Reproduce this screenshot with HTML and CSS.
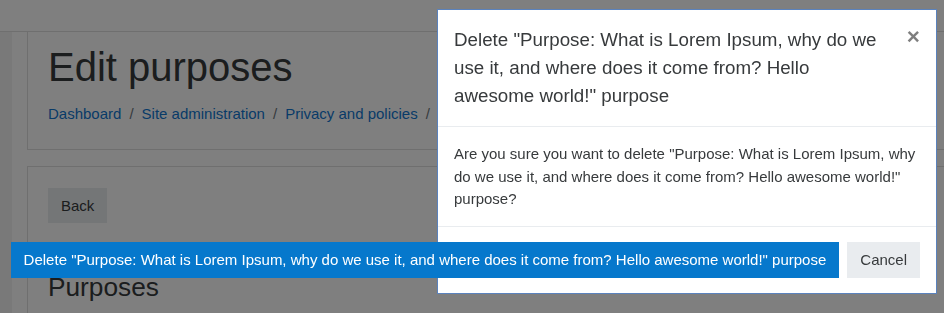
FILE: index.html
```html
<!DOCTYPE html>
<html lang="en">
<head>
    <meta charset="UTF-8">
    <meta name="viewport" content="width=device-width, initial-scale=1.0">
    <title>Edit purposes</title>
    <link rel="stylesheet" href="styles.css">
</head>
<body>
    <nav class="navbar"></nav>

    <div class="page">
        <div class="drawer-strip"></div>

        <div class="main">
            <!-- Page header -->
            <div class="card header-card">
                <h1>Edit purposes</h1>
                <ol class="breadcrumb">
                    <li><a href="#">Dashboard</a></li>
                    <li><a href="#">Site administration</a></li>
                    <li><a href="#">Privacy and policies</a></li>
                    <li class="crumb-hidden"></li>
                </ol>
            </div>

            <!-- Content -->
            <div class="card content-card">
                <button class="btn btn-secondary">Back</button>
                <h3>Purposes</h3>
            </div>
        </div>
    </div>

    <div class="backdrop"></div>

    <!-- Modal -->
    <div class="modal" role="dialog">
        <div class="modal-header">
            <h5 class="modal-title">Delete "Purpose: What is Lorem Ipsum, why do we use it, and where does it come from? Hello awesome world!" purpose</h5>
            <button class="close" aria-label="Close">&times;</button>
        </div>
        <div class="modal-body">
            Are you sure you want to delete "Purpose: What is Lorem Ipsum, why do we use it, and where does it come from? Hello awesome world!" purpose?
        </div>
        <div class="modal-footer">
            <button class="btn btn-primary">Delete "Purpose: What is Lorem Ipsum, why do we use it, and where does it come from? Hello awesome world!" purpose</button>
            <button class="btn btn-secondary">Cancel</button>
        </div>
    </div>
</body>
</html>
```

FILE: styles.css
```css
/* Global */
* {
    box-sizing: border-box;
    margin: 0;
    padding: 0;
}

body {
    font-family: "Liberation Sans", Arial, sans-serif;
    font-size: 15px;
    line-height: 1.5;
    color: #373a3c;
    background: #fff;
    overflow: hidden;
    height: 313px;
}

a {
    color: #1177d1;
    text-decoration: none;
}

/* Page behind the modal */
.navbar {
    height: 32px;
    background: #fff;
    border-bottom: 1px solid #dfdfdf;
}

.page {
    display: flex;
    width: calc(100% + 40px);
}

.drawer-strip {
    width: 12px;
    background: #f2f2f2;
    min-height: 281px;
}

.main {
    flex: 1;
    padding-left: 15px;
}

.card {
    background: #fff;
    border: 1px solid rgba(0, 0, 0, 0.125);
}

.header-card {
    border-top: none;
    padding: 11px 20px 23px;
    margin-bottom: 16px;
}

h1 {
    font-size: 40px;
    font-weight: 400;
    line-height: 1.2;
    color: #373a3c;
}

.breadcrumb {
    list-style: none;
    display: flex;
    white-space: nowrap;
    margin-top: 12px;
}

.breadcrumb li + li::before {
    content: "/";
    color: #6c757d;
    padding: 0 8px;
}

.content-card {
    padding: 21px 20px 0;
    min-height: 220px;
}

h3 {
    font-size: 26.25px;
    font-weight: 400;
    line-height: 1.2;
    margin-top: 49px;
}

/* Buttons */
.btn {
    font-family: inherit;
    font-size: 15px;
    line-height: 22.5px;
    padding: 6px 12px;
    border: 1px solid transparent;
    white-space: nowrap;
    cursor: pointer;
}

.content-card .btn {
    line-height: 21px;
}

.btn-primary {
    background: #0678cc;
    color: #fff;
}

.btn-secondary {
    background: #e9ecef;
    color: #373a3c;
}

/* Backdrop */
.backdrop {
    position: fixed;
    top: 0;
    left: 0;
    width: 100%;
    height: 100%;
    background: rgba(0, 0, 0, 0.5);
}

/* Modal */
.modal {
    position: absolute;
    top: 9px;
    left: 437px;
    width: 500px;
    background: #fff;
    border: 1px solid #5a82bd;
}

.modal-header {
    display: flex;
    align-items: flex-start;
    padding: 16px;
    border-bottom: 1px solid #e9ecef;
}

.modal-title {
    font-size: 18.75px;
    font-weight: 400;
    line-height: 1.5;
    color: #373a3c;
}

.close {
    font-family: inherit;
    font-size: 22.5px;
    font-weight: 700;
    line-height: 1;
    color: #000;
    opacity: 0.5;
    background: none;
    border: none;
    padding: 16px;
    margin: -16px -16px -16px auto;
}

.modal-body {
    padding: 16px 16px 15px;
}

.modal-footer {
    display: flex;
    align-items: center;
    justify-content: flex-end;
    padding: 11px 12px;
    border-top: 1px solid #e9ecef;
}

.modal-footer .btn {
    margin: 4px;
}
```
